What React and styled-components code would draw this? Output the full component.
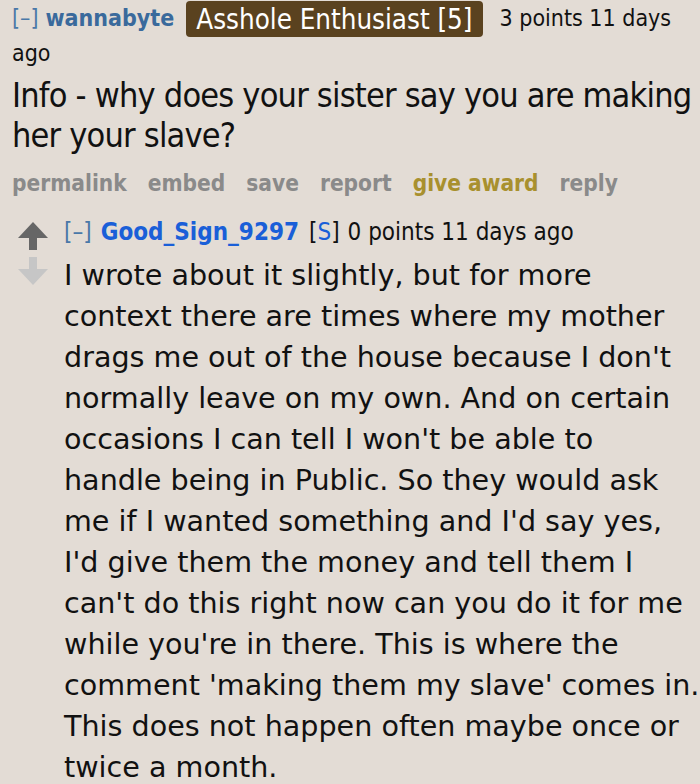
import React from 'react'
import styled, { createGlobalStyle } from 'styled-components'

const Global = createGlobalStyle`
  body {
    margin: 0;
    background: #e3dcd5;
  }
`

const Page = styled.div`
  background: #e3dcd5;
  width: 700px;
  height: 784px;
  overflow: hidden;
  padding: 0 0 0 12px;
  box-sizing: border-box;
  font-family: "DejaVu Sans", Verdana, sans-serif;
  color: #111;
`

const Tagline = styled.div`
  font-family: "DejaVu Sans Condensed", "DejaVu Sans", sans-serif;
  font-stretch: condensed;
  font-size: 23px;
  line-height: 32px;
  padding-top: 1px;
`

const Toggle = styled.span`
  color: #4a78a8;
`

const Author = styled.span`
  font-weight: bold;
  color: ${p => p.color || '#3a6a9c'};
  margin-left: ${p => p.gap || 7}px;
`

const Meta = styled.span`
  color: #111;
`

const Flair = styled.span`
  display: inline-block;
  background: #5a421f;
  color: #fff;
  font-size: 27.5px;
  line-height: 36px;
  padding: 0 10px;
  border-radius: 4px;
  margin: 0 17px 0 12px;
  vertical-align: middle;
`

const FirstBody = styled.p`
  margin: 6px 0 0;
  padding-right: 8px;
  font-family: "DejaVu Sans Condensed", "DejaVu Sans", sans-serif;
  font-stretch: condensed;
  font-size: 34px;
  letter-spacing: -0.8px;
  line-height: 40px;
`

const Actions = styled.ul`
  list-style: none;
  display: flex;
  gap: 21px;
  margin: 14px 0 0;
  padding: 0;
  font-family: "DejaVu Sans Condensed", "DejaVu Sans", sans-serif;
  font-stretch: condensed;
  font-weight: bold;
  font-size: 22.5px;
  line-height: 28px;
`

const Action = styled.li`
  color: ${p => (p.gold ? '#a8902e' : '#8a8a8a')};
`

const Child = styled.div`
  display: flex;
  margin-top: 21px;
`

const Votes = styled.div`
  display: flex;
  flex-direction: column;
  gap: 7px;
  width: 52px;
  flex-shrink: 0;
  padding-top: 4px;
  padding-left: 6px;
  box-sizing: border-box;
`

const Content = styled.div`
  flex: 1;
  min-width: 0;
`

const ChildTagline = styled.div`
  font-family: "DejaVu Sans Condensed", "DejaVu Sans", sans-serif;
  font-stretch: condensed;
  font-size: 24px;
  line-height: 28px;
`

const Sub = styled.span`
  margin-left: 10px;
  margin-right: 8px;
  & b {
    font-weight: normal;
    color: #1a5fd8;
  }
`

const Body = styled.div`
  margin-top: 9px;
  font-size: 28.6px;
  line-height: 41px;
`

const Line = styled.div`
  white-space: nowrap;
`

const Arrow = ({ up }) => (
  <svg width="30" height="28" viewBox="0 0 30 28">
    {up ? (
      <path d="M15 0 L30 16 L19 16 L19 28 L11 28 L11 16 L0 16 Z" fill="#666" />
    ) : (
      <path d="M11 0 L19 0 L19 12 L30 12 L15 28 L0 12 L11 12 Z" fill="#c6c6c6" />
    )}
  </svg>
)

const reply = [
  'I wrote about it slightly, but for more',
  'context there are times where my mother',
  "drags me out of the house because I don't",
  'normally leave on my own. And on certain',
  "occasions I can tell I won't be able to",
  'handle being in Public. So they would ask',
  "me if I wanted something and I'd say yes,",
  "I'd give them the money and tell them I",
  "can't do this right now can you do it for me",
  "while you're in there. This is where the",
  "comment 'making them my slave' comes in.",
  'This does not happen often maybe once or',
  'twice a month.',
]

export default function App() {
  return (
    <Page>
      <Global />
      <Tagline>
        <Toggle>[–]</Toggle>
        <Author>wannabyte</Author>
        <Flair>Asshole Enthusiast [5]</Flair>
        <Meta>3 points 11 days</Meta> <Meta>ago</Meta>
      </Tagline>
      <FirstBody>
        Info - why does your sister say you are making her your slave?
      </FirstBody>
      <Actions>
        <Action>permalink</Action>
        <Action>embed</Action>
        <Action>save</Action>
        <Action>report</Action>
        <Action gold>give award</Action>
        <Action>reply</Action>
      </Actions>
      <Child>
        <Votes>
          <Arrow up />
          <Arrow />
        </Votes>
        <Content>
          <ChildTagline>
            <Toggle>[–]</Toggle>
            <Author color="#1a5fd8" gap={9}>Good_Sign_9297</Author>
            <Sub>[<b>S</b>]</Sub>
            <Meta>0 points 11 days ago</Meta>
          </ChildTagline>
          <Body>
            {reply.map((text, i) => (
              <Line key={i}>{text}</Line>
            ))}
          </Body>
        </Content>
      </Child>
    </Page>
  )
}
